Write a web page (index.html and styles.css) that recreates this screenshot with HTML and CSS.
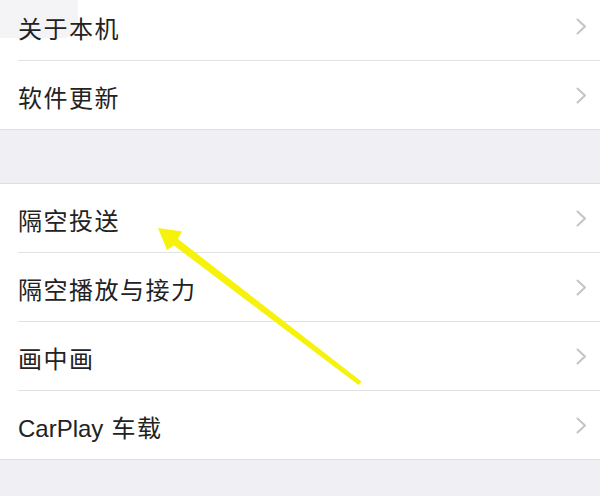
FILE: index.html
```html
<!DOCTYPE html>
<html lang="zh-CN">
<head>
    <meta charset="UTF-8">
    <meta name="viewport" content="width=device-width, initial-scale=1.0">
    <title>通用</title>
    <link rel="stylesheet" href="styles.css">
</head>
<body>
    <div class="group first">
        <div class="shade"></div>
        <div class="row"><span class="label">关于本机</span><span class="chev"></span></div>
        <div class="row"><span class="label">软件更新</span><span class="chev"></span></div>
    </div>

    <div class="group second">
        <div class="row"><span class="label">隔空投送</span><span class="chev"></span></div>
        <div class="row"><span class="label">隔空播放与接力</span><span class="chev"></span></div>
        <div class="row"><span class="label">画中画</span><span class="chev"></span></div>
        <div class="row"><span class="label"><span class="latin">CarPlay</span> 车载</span><span class="chev"></span></div>
    </div>

    <!-- yellow annotation arrow -->
    <svg class="arrow" width="600" height="496" viewBox="0 0 600 496">
        <polygon fill="#f6f20c" points="361.5,381.5 358.5,385 174,245.5 167,250 158,228 182,231.5 178,239"/>
    </svg>

    <template id="chev-tpl">
        <svg width="11" height="17" viewBox="0 0 11 17"><polyline points="1.5,1.5 9,8.5 1.5,15.5" fill="none" stroke="#c4c4c8" stroke-width="2" stroke-linecap="round" stroke-linejoin="round"/></svg>
    </template>
    <script>
        // put the same chevron in every row
        const tpl = document.getElementById('chev-tpl');
        document.querySelectorAll('.chev').forEach(c => {
            c.appendChild(tpl.content.cloneNode(true));
        });
    </script>
</body>
</html>
```

FILE: styles.css
```css
body {
    margin: 0;
    background-color: #efeff4;
    font-family: "Liberation Sans", "Noto Sans CJK SC", sans-serif;
    color: #222;
    overflow: hidden;
}

.group {
    position: relative;
    background-color: #fff;
    border-bottom: 1px solid #dedee2;
}

.group.first {
    margin-top: -8px;
}

.group.second {
    margin-top: 53px;
    border-top: 1px solid #dedee2;
}

.shade {
    position: absolute;
    left: 0;
    top: 8px;
    width: 78px;
    height: 38px;
    background-color: #f4f4f6;
    border-bottom-right-radius: 16px;
}

.row {
    position: relative;
    height: 68px;
    margin-left: 18px;
    padding-right: 13px;
    display: flex;
    align-items: center;
    justify-content: space-between;
    border-bottom: 1px solid #e2e2e5;
}

.row:last-child {
    border-bottom: none;
}

.label {
    font-size: 24px;
    letter-spacing: 1.5px;
    padding-top: 2px;
}

.latin {
    letter-spacing: 0;
}

.chev {
    display: flex;
    width: 11px;
    height: 17px;
}

.arrow {
    position: absolute;
    left: 0;
    top: 0;
}
```
